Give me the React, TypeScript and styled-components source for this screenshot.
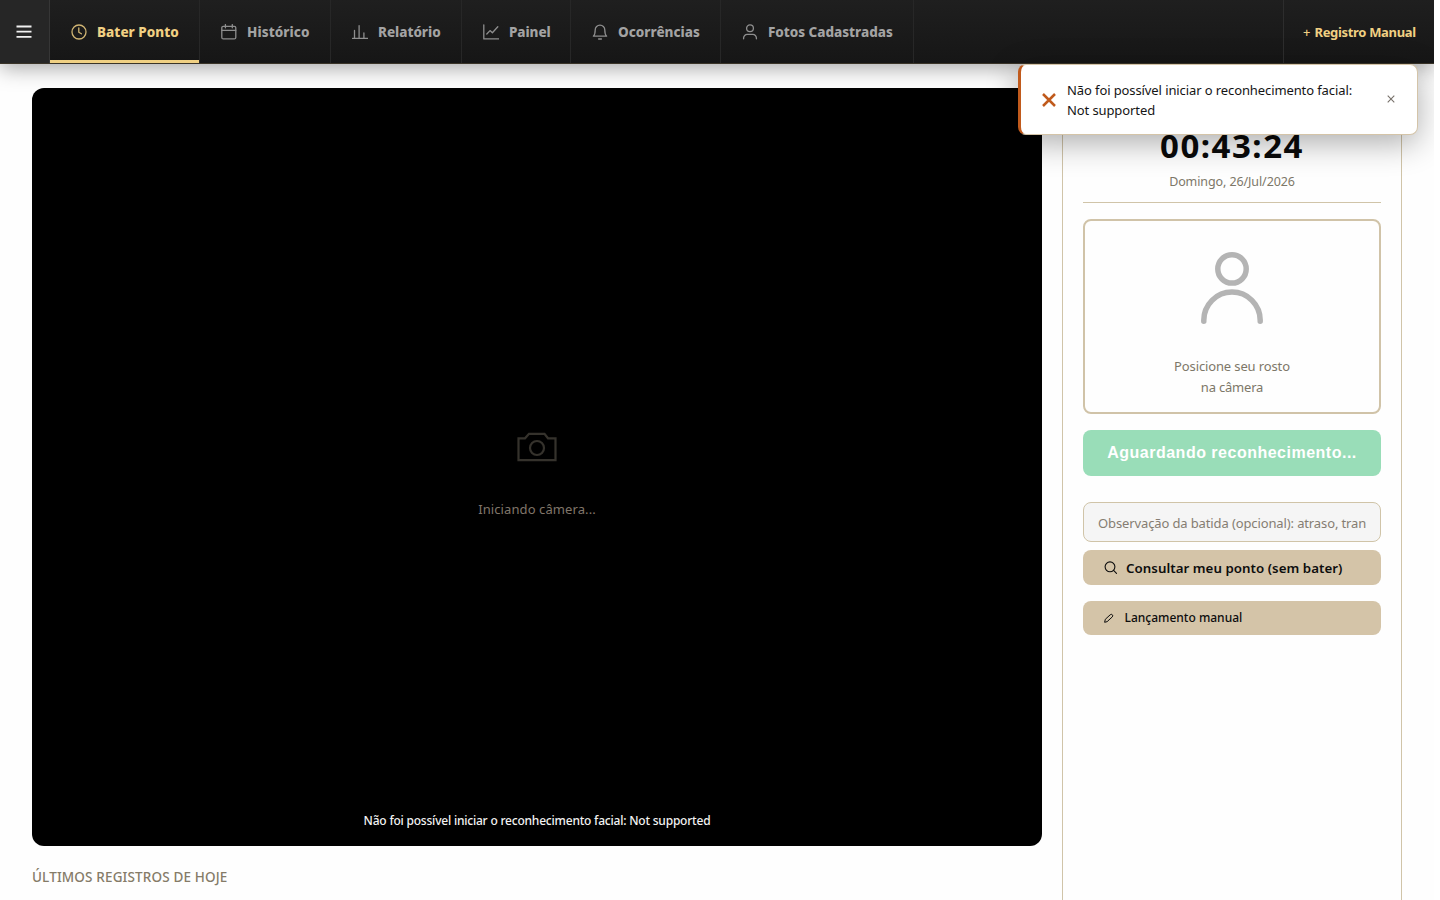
import React from "react";
import styled, { createGlobalStyle } from "styled-components";

const GlobalStyle = createGlobalStyle`
  * { box-sizing: border-box; }
  body { margin: 0; background: #fff; font-family: "Noto Sans", "Open Sans", sans-serif; overflow: hidden; }
  button, input { font-family: inherit; }
`;

const Page = styled.div`
  position: relative;
  width: 1434px;
  height: 900px;
  overflow: hidden;
  background: #fefefe;
`;

const Navbar = styled.nav`
  position: relative;
  z-index: 2;
  display: flex;
  height: 64px;
  background: linear-gradient(180deg, #1f1f1f, #161616);
  border-bottom: 1px solid #3a3428;
  box-shadow: 0 4px 20px rgba(0, 0, 0, 0.35);
`;

const MenuButton = styled.button`
  display: flex;
  align-items: center;
  justify-content: center;
  width: 50px;
  padding: 0 1px 0 0;
  border: 0;
  border-right: 1px solid #363636;
  background: #262626;
`;

const Tab = styled.a<{ $width: number; $active?: boolean }>`
  display: flex;
  align-items: center;
  gap: 10px;
  width: ${(p) => p.$width}px;
  padding-left: 21px;
  border-right: 1px solid #272727;
  box-shadow: inset 0 -3px ${(p) => (p.$active ? "#f0d083" : "transparent")};
  color: ${(p) => (p.$active ? "#f0d083" : "#a3a3a3")};
  white-space: nowrap;
  svg { flex: none; opacity: 0.85; }
`;

const Label = styled.span<{ $size: number; $spacing?: number; $weight?: number }>`
  font-size: ${(p) => p.$size}px;
  letter-spacing: ${(p) => p.$spacing ?? 0}px;
  font-weight: ${(p) => p.$weight ?? 400};
  white-space: nowrap;
`;

const ManualLink = styled.a`
  display: flex;
  align-items: center;
  gap: 4px;
  margin-left: auto;
  width: 151px;
  padding-left: 19px;
  border-left: 1px solid #2d2d2d;
  color: #f0d083;
`;

const Main = styled.main`
  display: flex;
  gap: 20px;
  padding: 24px 32px 0;
`;

const CameraColumn = styled.section`
  display: flex;
  flex-direction: column;
  width: 1010px;
`;

const CameraView = styled.div`
  display: flex;
  flex-direction: column;
  align-items: center;
  height: 758px;
  padding-top: 344px;
  border-radius: 12px;
  background: #000;
`;

const CameraHint = styled.div`
  margin-top: 36px;
  line-height: 20px;
  color: #80766a;
`;

const CameraStatus = styled.div`
  margin-top: auto;
  margin-bottom: 15px;
  line-height: 20px;
  color: #f2f2f2;
`;

const SectionTitle = styled.h2`
  margin: 21px 0 0;
  line-height: 20px;
  color: #857b68;
  font-size: 13px;
  font-weight: 500;
`;

const Panel = styled.aside`
  display: flex;
  flex-direction: column;
  width: 340px;
  height: 860px;
  padding: 31px 20px 0;
  border: 1px solid #d0c4a8;
  border-radius: 12px;
  text-align: center;
`;

const Clock = styled.div`
  height: 50px;
  line-height: 52px;
  color: #0a0a0a;
`;

const DateLine = styled.div`
  height: 33px;
  line-height: 20px;
  border-bottom: 1px solid #d0c4a8;
  color: #7d7768;
`;

const FaceCard = styled.div`
  display: flex;
  flex-direction: column;
  align-items: center;
  height: 195px;
  margin-top: 16px;
  padding-top: 29px;
  border: 2px solid #d0c3a8;
  border-radius: 8px;
  line-height: 21px;
  color: #7d7768;
  svg { margin-bottom: 30px; }
`;

const WaitButton = styled.button`
  height: 46px;
  margin-top: 16px;
  padding: 0;
  border: 0;
  border-radius: 8px;
  background: #99ddb8;
  color: #fff;
  font-family: "Liberation Sans", Arial, sans-serif;
`;

const NoteInput = styled.input`
  width: 100%;
  height: 40px;
  margin-top: 26px;
  padding: 2px 14px 0;
  border: 1px solid #d0c4a8;
  border-radius: 8px;
  background: #f5f5f5;
  font-size: 13px;
  letter-spacing: -0.12px;
  &::placeholder { color: #857d72; opacity: 1; }
`;

const SandButton = styled.button<{ $height: number; $top: number; $gap?: number; $bottom?: number }>`
  display: flex;
  align-items: center;
  gap: ${(p) => p.$gap ?? 8}px;
  height: ${(p) => p.$height}px;
  margin-top: ${(p) => p.$top}px;
  padding: 0 20px ${(p) => p.$bottom ?? 0}px;
  border: 0;
  border-radius: 8px;
  background: #d4c4a8;
  color: #0d0d0d;
`;

const Toast = styled.div`
  position: absolute;
  z-index: 3;
  top: 64px;
  right: 16px;
  display: flex;
  align-items: center;
  width: 400px;
  height: 71px;
  padding: 0 22px 0 21px;
  border: 1px solid #d4c4a8;
  border-left: 3px solid #c05a1c;
  border-radius: 8px;
  background: #fff;
  box-shadow: 0 8px 32px rgba(0, 0, 0, 0.32);
  color: #151515;
`;

const ToastText = styled.div`
  display: flex;
  flex-direction: column;
  margin-left: 11px;
  line-height: 20px;
`;

const ToastClose = styled.button`
  display: flex;
  margin-left: auto;
  padding: 0 0 2px;
  border: 0;
  background: none;
`;

const stroke = { fill: "none", stroke: "currentColor", strokeWidth: 1.3, strokeLinecap: "round", strokeLinejoin: "round" } as const;

const Icon = ({ children }: { children: React.ReactNode }) => (
  <svg width="16" height="16" viewBox="0 0 16 16" {...stroke}>{children}</svg>
);

const tabs = [
  { label: "Bater Ponto", width: 150, spacing: 0.03, icon: <><circle cx="8" cy="8" r="7" /><path d="M7.8 4v4.2l2.6 1.6" /></> },
  { label: "Histórico", width: 131, spacing: 0.08, icon: <><rect x="0.8" y="2.3" width="14" height="12.6" rx="1.5" /><path d="M0.8 6.3h14M4.4 0.6v3.2M11.3 0.6v3.2" /></> },
  { label: "Relatório", width: 131, spacing: -0.04, icon: <path d="M0.6 14.4h15M2.5 14V6.4M7.1 14V1.6M11.9 14V9" /> },
  { label: "Painel", width: 109, spacing: -0.1, icon: <path d="M0.8 0.8v14.1h14.8M3.8 10l3.2-3.4 2.4 2.2 5.4-6" /> },
  { label: "Ocorrências", width: 150, spacing: 0, icon: <path d="M1.4 12.2h13.2c-1.3-1.3-1.8-2.4-1.8-6.3a4.8 4.8 0 0 0-9.6 0c0 3.9-.5 5-1.8 6.3zM6.6 15h2.8" /> },
  { label: "Fotos Cadastradas", width: 193, spacing: -0.03, icon: <><circle cx="8" cy="4.3" r="3.4" /><path d="M1.6 14.8v-.8a3.6 3.6 0 0 1 3.6-3.6h5.6a3.6 3.6 0 0 1 3.6 3.6v.8" /></> },
];

export default function App() {
  return (
    <>
      <GlobalStyle />
      <Page>
        <Navbar>
          <MenuButton aria-label="Menu">
            <svg width="16" height="14" viewBox="0 0 16 14" stroke="#f0f0f0" strokeWidth="1.8"><path d="M0.5 1.5h15M0.5 6.7h15M0.5 11.8h15" /></svg>
          </MenuButton>
          {tabs.map((t, i) => (
            <Tab key={t.label} $width={t.width} $active={i === 0}>
              <Icon>{t.icon}</Icon>
              <Label $size={13.5} $weight={800} $spacing={t.spacing}>{t.label}</Label>
            </Tab>
          ))}
          <ManualLink>
            <Label $size={13} $weight={500}>+</Label>
            <Label $size={13} $weight={700} $spacing={-0.32}>Registro Manual</Label>
          </ManualLink>
        </Navbar>
        <Main>
          <CameraColumn>
            <CameraView>
              <svg width="40" height="30" viewBox="0 0 40 30" fill="none" stroke="#35322c" strokeWidth="2.2"><path d="M1.5 6.3H8l4-4.5h15.5l3.5 4.5h7.5V28.2H1.5z" /><circle cx="20" cy="16" r="7" /></svg>
              <CameraHint><Label $size={13} $spacing={0.1}>Iniciando câmera...</Label></CameraHint>
              <CameraStatus><Label $size={12} $weight={500} $spacing={-0.21}>Não foi possível iniciar o reconhecimento facial: Not supported</Label></CameraStatus>
            </CameraView>
            <SectionTitle><Label $size={13.5} $weight={500} $spacing={0.14}>ÚLTIMOS REGISTROS DE HOJE</Label></SectionTitle>
          </CameraColumn>
          <Panel>
            <Clock><Label $size={33} $weight={700} $spacing={1.5}>00:43:24</Label></Clock>
            <DateLine><Label $size={12.5} $spacing={-0.1}>Domingo, 26/Jul/2026</Label></DateLine>
            <FaceCard>
              <svg width="64" height="76" viewBox="0 0 64 76" fill="none" stroke="#b4b4b4" strokeWidth="5.5" strokeLinecap="round"><circle cx="32" cy="18.9" r="14.2" /><path d="M3.8 71.3v-1a28.2 28.2 0 0 1 56.4 0v1" /></svg>
              <Label $size={13} $spacing={-0.13}>Posicione seu rosto</Label>
              <Label $size={13} $spacing={-0.2}>na câmera</Label>
            </FaceCard>
            <WaitButton><Label $size={16} $weight={700} $spacing={0.5}>Aguardando reconhecimento...</Label></WaitButton>
            <NoteInput placeholder="Observação da batida (opcional): atraso, tran" />
            <SandButton $height={35} $top={8}>
              <svg width="15" height="15" viewBox="0 0 15 15" {...stroke} strokeWidth="1.1"><circle cx="7" cy="6.8" r="4.9" /><path d="M10.6 10.4l2.9 2.9" /></svg>
              <Label $size={13.3} $weight={600} $spacing={0.04}>Consultar meu ponto (sem bater)</Label>
            </SandButton>
            <SandButton $height={34} $top={16} $gap={9.5} $bottom={2}>
              <svg width="12" height="12" viewBox="0 0 12 12" {...stroke} strokeWidth="1"><path d="M1.7 10.9l.6-2.6 4.900-4.500a1.450 1.450 0 0 1 2.100 2.100l-4.900 4.500z" /></svg>
              <Label $size={12} $weight={500}>Lançamento manual</Label>
            </SandButton>
          </Panel>
        </Main>
        <Toast>
          <svg width="14" height="14" viewBox="0 0 14 14" stroke="#c05a1c" strokeWidth="2.5"><path d="M1 1l12 12M13 1L1 13" /></svg>
          <ToastText>
            <Label $size={13} $spacing={-0.1}>Não foi possível iniciar o reconhecimento facial:</Label>
            <Label $size={13} $spacing={-0.1}>Not supported</Label>
          </ToastText>
          <ToastClose aria-label="Fechar">
            <svg width="8" height="8" viewBox="0 0 8 8" stroke="#77716a" strokeWidth="1.1"><path d="M.7 .7l6.6 6.6M7.3 .7L.7 7.3" /></svg>
          </ToastClose>
        </Toast>
      </Page>
    </>
  );
}
